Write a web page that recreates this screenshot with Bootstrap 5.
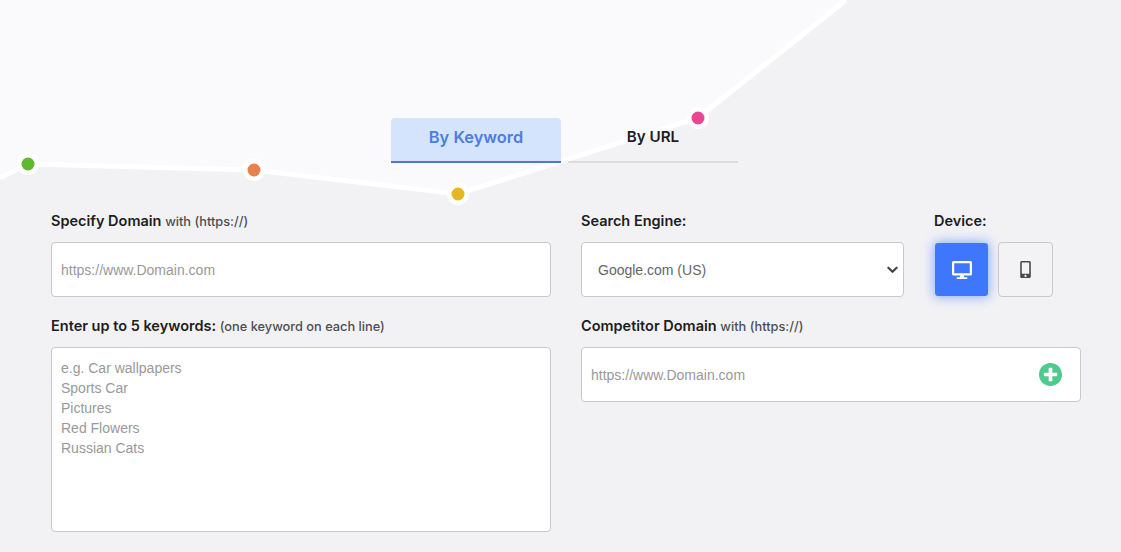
<!doctype html>
<html lang="en">
<head>
<meta charset="utf-8">
<title>Rank Checker</title>
<link href="https://cdn.jsdelivr.net/npm/bootstrap@5.3.0/dist/css/bootstrap.min.css" rel="stylesheet">
<style>
html,body{height:552px;overflow:hidden}
body{background:#f2f2f5;font-family:Inter,"Liberation Sans",sans-serif;color:#1d1d22;position:relative}
.bg-art{position:absolute;left:0;top:0;width:1121px;height:552px}
.page-wrap{position:relative;width:1060px;margin-left:36px;padding:118px 15px 0}
.row-gap{--bs-gutter-x:30px;margin-left:-15px;margin-right:-15px}
.tab-bar{margin-left:340px;gap:7px;border:0}
.tab-item{width:170px;height:45px;border:0;border-bottom:2px solid #dcdcdf;background:transparent;border-radius:4px 4px 0 0;font-size:15.2px;font-weight:600;color:#1d1d22;padding:0 0 5px}
.tab-item.is-on{background:#d4e4fd;color:#4f7ce0;border-bottom-color:#4a7bc8;font-size:16.4px}
.form-area{margin-top:48px}
.field-label{display:block;font-size:14.5px;font-weight:600;line-height:20px;margin:0 0 11px;color:#1d1d22;white-space:nowrap}
.field-label span{font-size:12.8px;font-weight:500;color:#4e4e52;line-height:1}
.field-box{height:55px;border:1px solid #c9c9cc;border-radius:4px;background-color:#fff;font-family:"Liberation Sans",sans-serif;font-size:14px;color:#666;padding:0 9px;box-shadow:none}
.field-box::placeholder,.area-box::placeholder,.plain-input::placeholder{color:#999;opacity:1}
.sel-box{width:323px;padding:2px 0 0 16px;background-image:url("data:image/svg+xml,%3csvg xmlns='http://www.w3.org/2000/svg' viewBox='0 0 12 8'%3e%3cpath fill='none' stroke='%23444' stroke-width='2.4' stroke-linecap='round' stroke-linejoin='round' d='M1.500 1.500 6 6l4.500-4.500'/%3e%3c/svg%3e");background-position:right 5px center;background-size:11px 8px}
.area-box{height:185px;resize:none;line-height:20px;padding:10px 9px;border:1px solid #c9c9cc;border-radius:4px;font-family:"Liberation Sans",sans-serif;font-size:14px;box-shadow:none}
.row-two{margin-top:19px}
.engine-col{width:323px}
.device-col{margin-left:30px}
.device-group{display:flex;align-items:flex-start;column-gap:9px}
.device-btn{width:55px;height:55px;padding:0;display:flex;align-items:center;justify-content:center;border-radius:4px}
.device-btn.on,.device-btn.on:hover{background:#3e77fb;background-clip:padding-box;border:1px solid transparent;box-shadow:0 0 12px rgba(62,119,251,.6)}
.device-btn.off{background:#f3f3f6;border:1px solid #c9c9cc}
.comp-box{display:flex;align-items:center;padding:0 18px 0 9px}
.plain-input{flex:1;border:0;outline:0;padding:2px 0 0;background:transparent;font-size:14px;font-family:"Liberation Sans",sans-serif;color:#555;min-width:0}
.add-btn{border:0;background:transparent;padding:0;line-height:0}
</style>
</head>
<body>
<svg class="bg-art" viewBox="0 0 1121 552" aria-hidden="true">
  <polygon points="0,0 846,0 698,118 458,194 254,170 28,164 0,178" fill="#fafafd"/>
  <polyline points="0,178 28,164 254,170 458,194 698,118 846,0" fill="none" stroke="#fff" stroke-width="5"/>
  <g fill="#fff"><circle cx="28" cy="164" r="11"/><circle cx="254" cy="170" r="11"/><circle cx="458" cy="194" r="11"/><circle cx="698" cy="118" r="11"/></g>
  <circle cx="28" cy="164" r="6.5" fill="#5fb92f"/>
  <circle cx="254" cy="170" r="6.5" fill="#e8824c"/>
  <circle cx="458" cy="194" r="6.5" fill="#e5b722"/>
  <circle cx="698" cy="118" r="6.5" fill="#ea4693"/>
</svg>
<main class="page-wrap">
  <div class="nav tab-bar d-flex">
    <button class="tab-item is-on" type="button">By Keyword</button>
    <button class="tab-item" type="button">By URL</button>
  </div>
  <form class="form-area">
    <div class="row row-gap">
      <div class="col-6">
        <label class="field-label" for="dom">Specify Domain <span>with (https://)</span></label>
        <input id="dom" class="form-control field-box" type="text" placeholder="https://www.Domain.com">
      </div>
      <div class="col-6 d-flex">
        <div class="engine-col">
          <label class="field-label" for="eng">Search Engine:</label>
          <select id="eng" class="form-select field-box sel-box"><option>Google.com (US)</option></select>
        </div>
        <div class="device-col">
          <div class="field-label">Device:</div>
          <div class="device-group">
            <button class="btn device-btn on" type="button" aria-label="Desktop">
              <svg width="20" height="18" viewBox="0 0 576 512" fill="#fff"><path d="M528 0H48C21.5 0 0 21.5 0 48v320c0 26.5 21.5 48 48 48h192l-16 48h-72c-13.3 0-24 10.7-24 24s10.7 24 24 24h272c13.3 0 24-10.7 24-24s-10.7-24-24-24h-72l-16-48h192c26.5 0 48-21.5 48-48V48c0-26.5-21.5-48-48-48zm-16 352H64V64h448v288z"/></svg>
            </button>
            <button class="btn device-btn off" type="button" aria-label="Mobile">
              <svg width="11" height="17" viewBox="0 0 320 512" fill="#4b4b4f"><path d="M272 0H48C21.5 0 0 21.5 0 48v416c0 26.5 21.5 48 48 48h224c26.5 0 48-21.5 48-48V48c0-26.5-21.5-48-48-48zM160 480c-17.7 0-32-14.3-32-32s14.3-32 32-32 32 14.3 32 32-14.3 32-32 32zm112-108c0 6.6-5.4 12-12 12H60c-6.6 0-12-5.4-12-12V60c0-6.6 5.4-12 12-12h200c6.6 0 12 5.4 12 12v312z"/></svg>
            </button>
          </div>
        </div>
      </div>
    </div>
    <div class="row row-gap row-two">
      <div class="col-6">
        <label class="field-label" for="kw">Enter up to 5 keywords: <span>(one keyword on each line)</span></label>
        <textarea id="kw" class="form-control area-box" placeholder="e.g. Car wallpapers&#10;Sports Car&#10;Pictures&#10;Red Flowers&#10;Russian Cats"></textarea>
      </div>
      <div class="col-6">
        <label class="field-label" for="comp">Competitor Domain <span>with (https://)</span></label>
        <div class="field-box comp-box">
          <input id="comp" class="plain-input" type="text" placeholder="https://www.Domain.com">
          <button class="add-btn" type="button" aria-label="Add competitor">
            <svg width="23" height="23" viewBox="8 8 496 496" fill="#4fc98d"><path d="M256 8C119 8 8 119 8 256s111 248 248 248 248-111 248-248S393 8 256 8zm144 276c0 6.600-5.400 12-12 12h-92v92c0 6.600-5.400 12-12 12h-56c-6.600 0-12-5.400-12-12v-92h-92c-6.600 0-12-5.400-12-12v-56c0-6.600 5.400-12 12-12h92v-92c0-6.600 5.400-12 12-12h56c6.600 0 12 5.400 12 12v92h92c6.600 0 12 5.400 12 12v56z"/></svg>
          </button>
        </div>
      </div>
    </div>
  </form>
</main>
<script src="https://cdn.jsdelivr.net/npm/bootstrap@5.3.0/dist/js/bootstrap.bundle.min.js"></script>
</body>
</html>
